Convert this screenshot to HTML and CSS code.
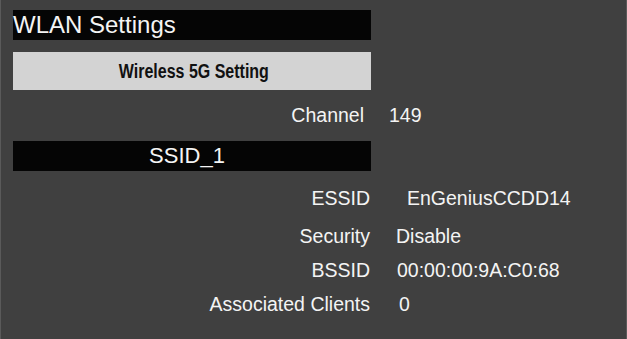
FILE: index.html
```html
<!DOCTYPE html>
<html>
<head>
    <title>WLAN Settings</title>
    <meta http-equiv="Content-Type" content="text/html; charset=utf-8"/>
    <link rel="stylesheet" href="styles.css">
</head>
<body>
    <div class="main-panel">
        <div class="header0">WLAN Settings</div>
        <div class="header1"><span class="narrow">Wireless 5G Setting</span></div>

        <div class="row row-channel">
            <div class="td-caption">Channel</div>
            <div class="td-value">149</div>
        </div>

        <div class="header2">SSID_1</div>

        <div class="row row-essid">
            <div class="td-caption">ESSID</div>
            <div class="td-value">EnGeniusCCDD14</div>
        </div>
        <div class="row row-security">
            <div class="td-caption">Security</div>
            <div class="td-value">Disable</div>
        </div>
        <div class="row">
            <div class="td-caption">BSSID</div>
            <div class="td-value">00:00:00:9A:C0:68</div>
        </div>
        <div class="row row-clients">
            <div class="td-caption">Associated Clients</div>
            <div class="td-value">0</div>
        </div>
    </div>
</body>
</html>
```

FILE: styles.css
```css
html {
    height: 100%;
}

body {
    height: 100%;
    margin: 0;
    padding: 0;
    overflow: hidden;
    background: #404040;
    font-family: 'Liberation Sans', Arial, sans-serif;
    font-size: 19.5px;
    color: #f4f4f4;
}

/* no narrow face installed, so squeeze the regular one */
.narrow {
    display: inline-block;
    transform: scaleX(0.80);
    transform-origin: center center;
    white-space: nowrap;
}

.main-panel {
    height: 100%;
    box-sizing: border-box;
    padding-top: 10px;
    border-left: 1px solid #5a5a5a;
    border-right: 1px solid #5a5a5a;
}

.header0 {
    margin-left: 12px;
    width: 358px;
    height: 30px;
    line-height: 30px;
    background: #050505;
    font-size: 24px;
}

.header1 {
    margin: 12px 0 0 12px;
    width: 358px;
    height: 38px;
    line-height: 38px;
    background: #d3d3d3;
    color: #111111;
    font-weight: bold;
    font-size: 20px;
    text-align: center;
}

.header1 .narrow {
    margin-left: 4px;
}

.header2 {
    margin: 11px 0 0 12px;
    width: 358px;
    height: 30px;
    line-height: 30px;
    background: #050505;
    font-size: 22px;
    text-align: center;
    padding-right: 10px;
    box-sizing: border-box;
}

.row {
    display: flex;
    height: 34px;
    line-height: 34px;
}

.td-caption {
    width: 369px;
    text-align: right;
}

.td-value {
    padding-left: 27px;
}

.row-channel {
    margin-top: 10px;
    height: 30px;
    line-height: 30px;
}

.row-channel .td-caption {
    width: 363px;
}

.row-channel .td-value {
    padding-left: 25px;
}

.row-essid {
    margin-top: 10px;
}

.row-essid .td-value {
    padding-left: 37px;
}

.row-security {
    margin-top: 4px;
}

.row-security .td-value {
    padding-left: 26px;
}

.row-clients .td-value {
    padding-left: 29px;
}
```
